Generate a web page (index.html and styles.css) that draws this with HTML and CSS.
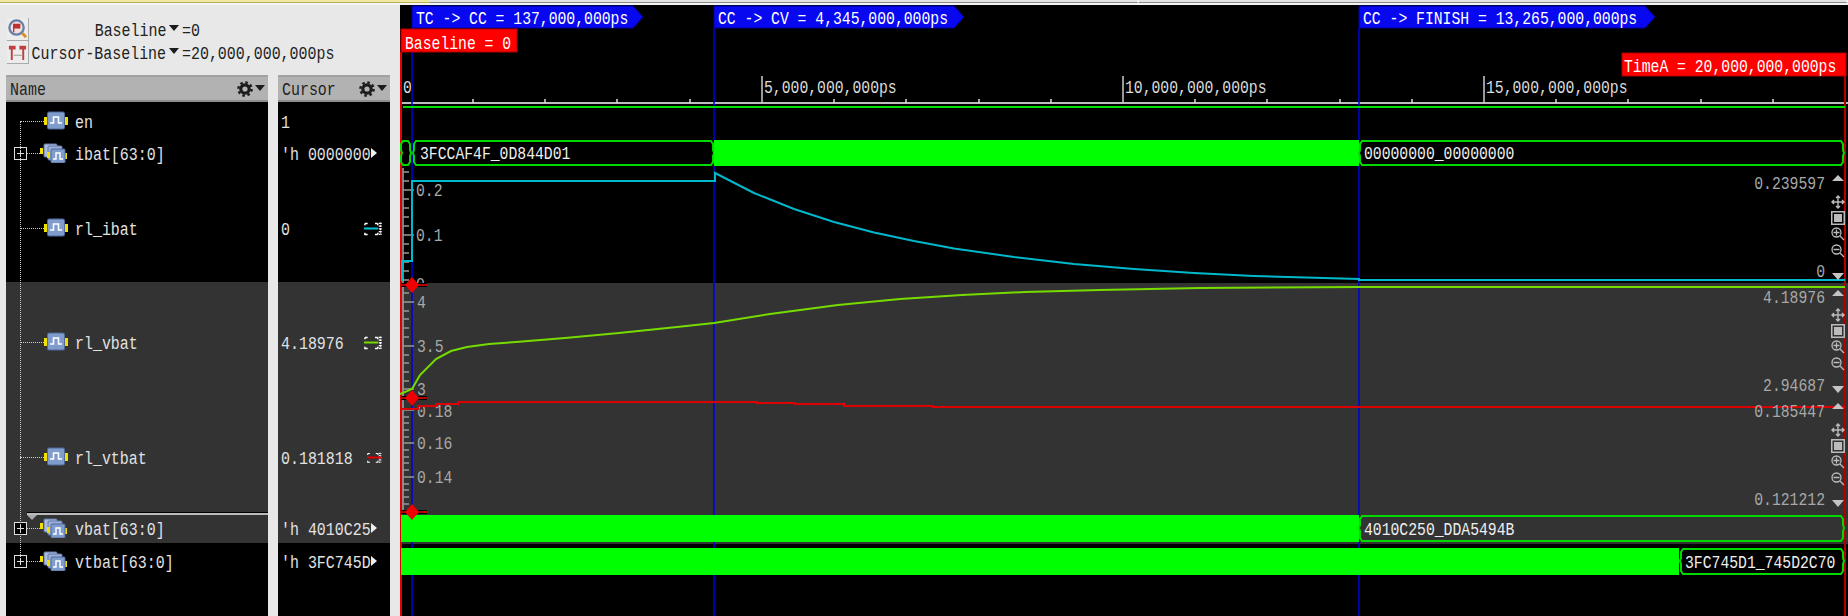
FILE: index.html
```html
<!DOCTYPE html>
<html lang="en">
<head>
<meta charset="UTF-8">
<title>Waveform</title>
<link rel="stylesheet" href="styles.css">
</head>
<body>
<svg class="defs" width="0" height="0">
  <symbol id="sig" viewBox="0 0 24 20">
    <rect x="0" y="6" width="4" height="8" fill="#f0e000"/>
    <rect x="20" y="6" width="4" height="8" fill="#f0e000"/>
    <rect x="3.5" y="1" width="17" height="17" rx="1.5" fill="#7f9ccc" stroke="#50689c"/>
    <path d="M6 12h3.5V6h5v6H18" fill="none" stroke="#fff" stroke-width="1.6"/>
  </symbol>
  <symbol id="grp" viewBox="0 0 28 20">
    <rect x="0" y="5" width="3" height="6" fill="#f0e000"/>
    <rect x="4" y="1" width="13" height="13" rx="1" fill="#aabbdd" stroke="#6078a8"/>
    <rect x="8" y="3" width="14" height="14" rx="1" fill="#9ab0d8" stroke="#6078a8"/>
    <rect x="7" y="9" width="3" height="6" fill="#f0e000"/>
    <rect x="24" y="10" width="3" height="6" fill="#f0e000"/>
    <rect x="11" y="6" width="14" height="14" rx="1" fill="#7f9ccc" stroke="#50689c"/>
    <path d="M13 16h3v-6h4v6h3" fill="none" stroke="#fff" stroke-width="1.4"/>
  </symbol>
  <symbol id="gear" viewBox="0 0 16 16">
    <circle cx="8" cy="8" r="4.2" fill="none" stroke="#1c1c1c" stroke-width="3.2"/>
    <circle cx="8" cy="8" r="6.6" fill="none" stroke="#1c1c1c" stroke-width="2.4" stroke-dasharray="2.6 2.6"/>
  </symbol>
  <symbol id="range" viewBox="0 0 20 15">
    <path d="M1 2h3M1 2v2M1 12v2h3M12 2h3M12 14h3M15 2v2M15 12v2" fill="none" stroke="#fff" stroke-width="1.6"/>
    <path d="M18 1v13M16 2h4M16 5h4M16 8h4M16 11h4M16 14h4" fill="none" stroke="#fff" stroke-width="1.4" stroke-dasharray="2 1"/>
  </symbol>
  <symbol id="move" viewBox="0 0 14 14">
    <path d="M7 1v12M1 7h12M5 3l2-2 2 2M5 11l2 2 2-2M3 5L1 7l2 2M11 5l2 2-2 2" fill="none" stroke="#bbb" stroke-width="1.4"/>
  </symbol>
  <symbol id="fit" viewBox="0 0 14 14">
    <rect x=".75" y=".75" width="12.5" height="12.5" fill="none" stroke="#bbb" stroke-width="1.5"/>
    <rect x="3" y="3" width="8" height="8" fill="#bbb"/>
  </symbol>
  <symbol id="zin" viewBox="0 0 14 14">
    <circle cx="5.5" cy="5.5" r="4.5" fill="none" stroke="#bbb" stroke-width="1.3"/>
    <path d="M5.5 2.5v6M2.5 5.5h6M9 9l4 4" fill="none" stroke="#bbb" stroke-width="1.3"/>
  </symbol>
  <symbol id="zout" viewBox="0 0 14 14">
    <circle cx="5.5" cy="5.5" r="4.5" fill="none" stroke="#bbb" stroke-width="1.3"/>
    <path d="M2.5 5.5h6M9 9l4 4" fill="none" stroke="#bbb" stroke-width="1.3"/>
  </symbol>
  <symbol id="tools" viewBox="0 0 14 64">
    <use href="#move" width="14" height="14" y="0"/>
    <use href="#fit" width="14" height="14" y="16"/>
    <use href="#zin" width="14" height="14" y="32"/>
    <use href="#zout" width="14" height="14" y="49"/>
  </symbol>
</svg>

<div class="strip">
  <div class="strip-on"></div>
  <div class="strip-off"></div>
  <div class="strip-off"></div>
</div>

<div class="main">
  <div class="side">
    <div class="delta">
      <div class="delta-row">
        <svg class="tool" viewBox="0 0 22 23">
          <circle cx="10" cy="10" r="7.5" fill="#f0e0e0" stroke="#6a7fa8" stroke-width="2.4"/>
          <rect x="7" y="6" width="7" height="5" fill="#c03030"/>
          <path d="M7 6v9" stroke="#c03030" stroke-width="1.4"/>
          <path d="M16 16l4 4" stroke="#d89020" stroke-width="3"/>
        </svg>
        <div class="delta-name"><span class="txt from-right">Baseline</span></div>
        <i class="arrow"></i>
        <span class="txt">=0</span>
      </div>
      <div class="delta-row">
        <svg class="tool" viewBox="0 0 22 23">
          <path d="M2 5h7v4H6v11H4V9H2zM13 5h7v4h-2v11h-2V9h-3z" fill="#c04040"/>
          <path d="M7 15h9" stroke="#b0b0b0" stroke-width="1.4"/>
        </svg>
        <div class="delta-name"><span class="txt from-right">Cursor-Baseline</span></div>
        <i class="arrow"></i>
        <span class="txt">=20,000,000,000ps</span>
      </div>
    </div>

    <div class="panes">
      <div class="pane pane-name">
        <div class="head">
          <span class="txt">Name</span>
          <svg class="gear"><use href="#gear"/></svg>
          <i class="arrow"></i>
        </div>
        <div class="list">
          <div class="trunk"></div>
          <div class="row r-en">
            <div class="tree"><i class="conn"></i></div>
            <svg class="ico"><use href="#sig"/></svg>
            <span class="txt">en</span>
          </div>
          <div class="row r-ibat bus">
            <div class="tree"><i class="plus"></i><i class="conn"></i></div>
            <svg class="ico"><use href="#grp"/></svg>
            <span class="txt">ibat[63:0]</span>
          </div>
          <div class="row r-ana1">
            <div class="tree"><i class="conn"></i></div>
            <svg class="ico"><use href="#sig"/></svg>
            <span class="txt">rl_ibat</span>
          </div>
          <div class="row r-ana2 dark">
            <div class="tree"><i class="conn"></i></div>
            <svg class="ico"><use href="#sig"/></svg>
            <span class="txt">rl_vbat</span>
          </div>
          <div class="row r-ana3 dark">
            <div class="tree"><i class="conn"></i></div>
            <svg class="ico"><use href="#sig"/></svg>
            <span class="txt">rl_vtbat</span>
          </div>
          <div class="row r-vbat bus dark">
            <div class="tree"><i class="plus"></i><i class="conn"></i></div>
            <svg class="ico"><use href="#grp"/></svg>
            <span class="txt">vbat[63:0]</span>
          </div>
          <div class="row r-vtbat bus">
            <div class="tree"><i class="plus"></i><i class="conn"></i></div>
            <svg class="ico"><use href="#grp"/></svg>
            <span class="txt">vtbat[63:0]</span>
          </div>
          <div class="drop"></div>
        </div>
      </div>

      <div class="pane pane-cursor">
        <div class="head">
          <span class="txt">Cursor</span>
          <svg class="gear"><use href="#gear"/></svg>
          <i class="arrow"></i>
        </div>
        <div class="list">
          <div class="row r-en val"><span class="txt">1</span></div>
          <div class="row r-ibat val"><span class="txt">'h 0000000</span><i class="more"></i></div>
          <div class="row r-ana1 val">
            <span class="txt">0</span>
            <svg class="range c-cyan"><use href="#range"/><path d="M0 7.5h14"/></svg>
          </div>
          <div class="row r-ana2 val dark">
            <span class="txt">4.18976</span>
            <svg class="range c-lime"><use href="#range"/><path d="M0 7.5h14"/></svg>
          </div>
          <div class="row r-ana3 val dark">
            <span class="txt">0.181818</span>
            <svg class="range c-red"><use href="#range"/><path d="M0 7.5h14"/></svg>
          </div>
          <div class="row r-vbat val dark"><span class="txt">'h 4010C25</span><i class="more"></i></div>
          <div class="row r-vtbat val"><span class="txt">'h 3FC745D</span><i class="more"></i></div>
        </div>
      </div>
    </div>
  </div>

  <svg class="wave" viewBox="400 5 1448 611">
    <!-- row backgrounds -->
    <rect x="400" y="5" width="1448" height="611" fill="#000"/>
    <text class="lab" x="416" y="290">0</text>
    <rect x="400" y="283" width="1448" height="261" fill="#333"/>

    <!-- time axis -->
    <path class="axis" d="M400 103H1848"/>
    <path class="tick-major" d="M762 76v27M1123 76v27M1484 76v27"/>
    <path class="tick-minor" d="M473 99v4M545 99v4M617 99v4M690 99v4M834 99v4M906 99v4M979 99v4M1051 99v4M1195 99v4M1267 99v4M1340 99v4M1412 99v4M1556 99v4M1628 99v4M1701 99v4M1773 99v4"/>
    <text class="ax" x="403" y="93">0</text>
    <text class="ax" x="764" y="93">5,000,000,000ps</text>
    <text class="ax" x="1125" y="93">10,000,000,000ps</text>
    <text class="ax" x="1486" y="93">15,000,000,000ps</text>

    <!-- cursors -->
    <path class="cur-blue" d="M412 28V616M714 28V616M1359 28V616"/>
    <path class="cur-red" d="M401 52V616"/>
    <path class="cur-end" d="M1845 76V616"/>

    <!-- analog y axes -->
    <path class="yaxis" d="M403 168V511"/>
    <path class="yt" d="M403 172h6M403 181h6M403 199h6M403 208h6M403 217h6M403 226h6M403 244h6M403 253h6M403 262h6M403 271h6M403 280h6"/>
    <path class="yt" d="M403 190h11M403 235h11"/>
    <path class="yt" d="M403 293h6M403 311h6M403 319h6M403 328h6M403 337h6M403 355h6M403 363h6M403 372h6M403 381h6"/>
    <path class="yt" d="M403 302h11M403 346h11M403 389h11"/>
    <path class="yt" d="M403 417h6M403 423h6M403 430h6M403 437h6M403 450h6M403 457h6M403 463h6M403 470h6M403 484h6M403 490h6M403 497h6M403 504h6"/>
    <path class="yt" d="M403 410h11M403 443h11M403 477h11"/>
    <text class="lab" x="416" y="196">0.2</text>
    <text class="lab" x="416" y="241">0.1</text>
    <text class="lab" x="417" y="308">4</text>
    <text class="lab" x="417" y="352">3.5</text>
    <text class="lab" x="417" y="395">3</text>
    <text class="lab" x="417" y="417">0.18</text>
    <text class="lab" x="417" y="449">0.16</text>
    <text class="lab" x="417" y="483">0.14</text>

    <!-- en -->
    <path class="en" d="M403 107H1845"/>

    <!-- ibat bus -->
    <path class="bus-o" d="M403 141H408L410 144V150L411 153L410 156V162L408 165H403L401 162V156L402 153L401 150V144Z"/>
    <path class="bus-o" d="M416 141H711L713 144V150L714 153L713 156V162L711 165H416L414 162V156L413 153L414 150V144Z"/>
    <rect class="bus-s" x="714" y="140" width="645" height="26"/>
    <path class="bus-o" d="M1362 141H1841L1843 144V150L1844 153L1843 156V162L1841 165H1362L1360 162V156L1359 153L1360 150V144Z"/>
    <text class="bv" x="420" y="159">3FCCAF4F_0D844D01</text>
    <text class="bv" x="1364" y="159">00000000_00000000</text>

    <!-- analog curves -->
    <polyline class="w-cyan" points="402,281 402,261 412,261 412,181 715,181 715,173 754,193 794,209 834,222 874,232.5 914,241 954,248.5 1014,257 1074,264 1134,269 1194,273 1254,276 1359,279 1359,280 1845,280"/>
    <polyline class="w-lime" points="400,394 412,389 420,375 436,359 451,351 467,347 489,344 516,342 565,338 619,333 677,327 714,323 770,314 838,305 900,299 962,295 1025,292 1100,290 1200,288 1359,287 1845,287"/>
    <polyline class="w-red" points="402,409 418,409 418,406 436,406 436,404 458,404 458,402 757,402 757,403 795,403 795,404 844,404 844,406 933,406 933,407 1845,407"/>

    <!-- vbat, vtbat buses -->
    <rect class="bus-s" x="401" y="515" width="958" height="27"/>
    <path class="bus-o" d="M1362 516H1841L1843 519V525L1844 528L1843 531V538L1841 541H1362L1360 538V531L1359 528L1360 525V519Z"/>
    <text class="bv" x="1364" y="535">4010C250_DDA5494B</text>
    <rect class="bus-s" x="401" y="548" width="1278" height="27"/>
    <path class="bus-o" d="M1683 549H1841L1843 552V558L1844 561L1843 564V571L1841 574H1683L1681 571V564L1680 561L1681 558V552Z"/>
    <text class="bv" x="1685" y="568">3FC745D1_745D2C70</text>

    <!-- baseline diamonds -->
    <g class="mk">
      <path class="mk-back" d="M401 285h26M401 398h26M401 512h26"/>
      <path class="mk-d" d="M412 277l7 8-7 8-7-8zM412 390l7 8-7 8-7-8zM412 504l7 8-7 8-7-8z"/>
      <path class="mk-line" d="M401 285h26M401 398h26M401 512h26"/>
    </g>

    <!-- right scale values -->
    <text class="lab end" x="1825" y="189">0.239597</text>
    <text class="lab end" x="1825" y="277">0</text>
    <text class="lab end" x="1825" y="303">4.18976</text>
    <text class="lab end" x="1825" y="391">2.94687</text>
    <text class="lab end" x="1825" y="417">0.185447</text>
    <text class="lab end" x="1825" y="505">0.121212</text>
    <path class="sc" d="M1838 175l6 6h-12zM1832 273h12l-6 7zM1838 290l6 6h-12zM1832 386h12l-6 7zM1838 403l6 6h-12zM1832 500h12l-6 7z"/>
    <use href="#tools" x="1831" y="195" width="14" height="64"/>
    <use href="#tools" x="1831" y="308" width="14" height="64"/>
    <use href="#tools" x="1831" y="423" width="14" height="64"/>

    <!-- marker flags -->
    <path class="flag" d="M412 6H633L643 17L633 28H412Z"/>
    <path class="flag" d="M714 6H954L964 17L954 28H714Z"/>
    <path class="flag" d="M1359 6H1645L1655 17L1645 28H1359Z"/>
    <text class="ft" x="416" y="24">TC -&gt; CC = 137,000,000ps</text>
    <text class="ft" x="718" y="24">CC -&gt; CV = 4,345,000,000ps</text>
    <text class="ft" x="1363" y="24">CC -&gt; FINISH = 13,265,000,000ps</text>
    <rect class="flag-r" x="401" y="29" width="116" height="23"/>
    <rect class="flag-r" x="1622" y="53" width="224" height="23"/>
    <text class="ft" x="405" y="49">Baseline = 0</text>
    <text class="ft" x="1624" y="72">TimeA = 20,000,000,000ps</text>
  </svg>
</div>
</body>
</html>
```

FILE: styles.css
```css
html, body {
    margin: 0;
    height: 616px;
    overflow: hidden;
    background: #e8e8e8;
}
.defs {
    position: absolute;
}
.txt {
    display: inline-block;
    padding-top: 3px;
    font: 18px "Liberation Mono", monospace;
    line-height: 20px;
    white-space: nowrap;
    transform: scaleX(.83);
    transform-origin: 0 50%;
}
.from-right {
    transform-origin: 100% 50%;
}

/* top strip */
.strip {
    display: flex;
    height: 5px;
    background: #f4f4f4;
}
.strip-on {
    width: 430px;
    height: 2px;
    background: #f0e8a0;
    border-bottom: 1px solid #b8b060;
}
.strip-off {
    flex: 1;
    height: 2px;
    background: #e4e4e4;
    border-bottom: 1px solid #8a8a8a;
    border-right: 2px solid #f4f4f4;
}

.main {
    display: grid;
    grid-template-columns: 400px 1fr;
    height: 611px;
}

/* left side */
.side {
    display: flex;
    flex-direction: column;
    padding: 13px 10px 0 6px;
    color: #222;
    min-height: 0;
}
.delta {
    display: flex;
    flex-direction: column;
    gap: 1px;
    margin-bottom: 12px;
}
.delta-row {
    display: flex;
    align-items: center;
    height: 22px;
}
.tool {
    width: 22px;
    height: 23px;
    margin: 0 3px 0 1px;
    background: #ececec;
    border-right: 1px solid #aaa;
    border-bottom: 1px solid #aaa;
    box-sizing: border-box;
    flex: none;
}
.delta-name {
    display: flex;
    justify-content: flex-end;
    width: 134px;
}
.arrow {
    flex: none;
    width: 0;
    height: 0;
    margin: 0 3px 3px 3px;
    border-left: 5px solid transparent;
    border-right: 5px solid transparent;
    border-top: 6px solid #1c1c1c;
}

.panes {
    display: flex;
    gap: 10px;
    flex: 1;
    min-height: 0;
}
.pane {
    display: flex;
    flex-direction: column;
}
.pane-name {
    width: 262px;
}
.pane-cursor {
    width: 112px;
}
.head {
    display: flex;
    align-items: center;
    height: 27px;
    padding: 0 0 0 4px;
    box-sizing: border-box;
    background: #b2b2b2;
    border-top: 2px solid #a2a2a2;
    border-bottom: 2px solid #8e8e8e;
}
.head .txt {
    margin-right: auto;
}
.head .arrow {
    margin: 0 3px 2px 2px;
}
.gear {
    width: 16px;
    height: 16px;
}
.list {
    position: relative;
    flex: 1;
    background: #000;
    color: #e2e2e2;
}

/* signal rows */
.row {
    display: flex;
    align-items: center;
    box-sizing: border-box;
}
.dark {
    background: #333;
}
.r-en { height: 38px; }
.r-ibat { height: 26px; }
.r-ana1 { height: 116px; padding-top: 8px; }
.r-ana2 { height: 117px; padding-top: 3px; }
.r-ana3 { height: 116px; }
.r-vbat { height: 28px; padding-bottom: 2px; }
.r-vtbat { height: 36px; }

.tree {
    display: flex;
    align-items: center;
    flex: none;
    box-sizing: border-box;
    width: 38px;
    padding-left: 14px;
}
.bus .tree {
    width: 34px;
    padding-left: 8px;
}
.conn {
    flex: 1;
    border-top: 1px dotted #ccc;
}
.plus {
    flex: none;
    width: 13px;
    height: 13px;
    box-sizing: border-box;
    border: 1px solid #ddd;
    background:
        linear-gradient(#ddd, #ddd) center / 7px 1px no-repeat,
        linear-gradient(#ddd, #ddd) center / 1px 7px no-repeat,
        #000;
}
.ico {
    flex: none;
    width: 24px;
    height: 20px;
    margin-right: 7px;
}
.bus .ico {
    width: 28px;
}
.trunk {
    position: absolute;
    left: 14px;
    top: 19px;
    height: 436px;
    border-left: 1px dotted #ccc;
}
.drop {
    position: absolute;
    left: 21px;
    right: 0;
    top: 410px;
    height: 2px;
    background: #bbb;
    border-top: 1px solid #000;
}
.drop::after {
    content: "";
    position: absolute;
    left: 0;
    top: 2px;
    border-left: 5px solid transparent;
    border-right: 5px solid transparent;
    border-top: 5px solid #aaa;
}
.val {
    padding-left: 3px;
}
.more {
    width: 0;
    height: 0;
    margin-left: -1px;
    border-left: 6px solid #eee;
    border-top: 5px solid transparent;
    border-bottom: 5px solid transparent;
    transform: translateX(1px);
}
.val .txt {
    width: 90px;
}
.range {
    width: 20px;
    height: 15px;
    margin-left: auto;
    margin-right: 8px;
    stroke-width: 2;
    fill: none;
}
.c-cyan { stroke: #00c4d8; }
.c-lime { stroke: #76dc00; }
.c-red { stroke: #e00000; }

/* waveform canvas */
.wave {
    display: block;
    width: 1448px;
    height: 611px;
}
.wave text {
    font: 18px "Liberation Mono", monospace;
    transform: scaleX(.82);
    transform-box: fill-box;
    transform-origin: 0 50%;
}
.wave .end {
    text-anchor: end;
    transform-origin: 100% 50%;
}
.wave .lab {
    fill: #a8a8a8;
}
.wave .ax {
    fill: #ddd;
}
.wave .bv {
    fill: #eee;
}
.wave .ft {
    fill: #fff;
}
.axis {
    stroke: #bdbdbd;
    stroke-width: 2;
}
.tick-major {
    stroke: #ccc;
    stroke-width: 1.5;
}
.tick-minor {
    stroke: #ddd;
    stroke-width: 1.5;
}
.cur-blue {
    stroke: #0000e0;
    stroke-width: 1.5;
    fill: none;
}
.cur-red {
    stroke: #e00000;
    stroke-width: 2;
}
.cur-end {
    stroke: #b00000;
    stroke-width: 2;
}
.yaxis {
    stroke: #b0a0a0;
    stroke-width: 1.5;
}
.yt {
    stroke: #999;
    stroke-width: 1.5;
    fill: none;
}
.en {
    stroke: #00e000;
    stroke-width: 2;
}
.bus-o {
    fill: none;
    stroke: #00d800;
    stroke-width: 2;
}
.bus-s {
    fill: #00ff00;
}
.w-cyan, .w-lime, .w-red {
    fill: none;
    stroke-width: 2;
}
.w-cyan { stroke: #00b8cc; }
.w-lime { stroke: #76dc00; }
.w-red { stroke: #dc0000; }
.mk-back {
    stroke: #000;
    stroke-width: 4;
}
.mk-d {
    fill: #f00000;
}
.mk-line {
    stroke: #f00000;
    stroke-width: 1.5;
}
.sc {
    fill: #c4c4c4;
}
.flag {
    fill: #0808f0;
    stroke: #0000a0;
    stroke-width: 1;
}
.flag-r {
    fill: #ff0000;
    stroke: #b00000;
    stroke-width: 1;
}
```
